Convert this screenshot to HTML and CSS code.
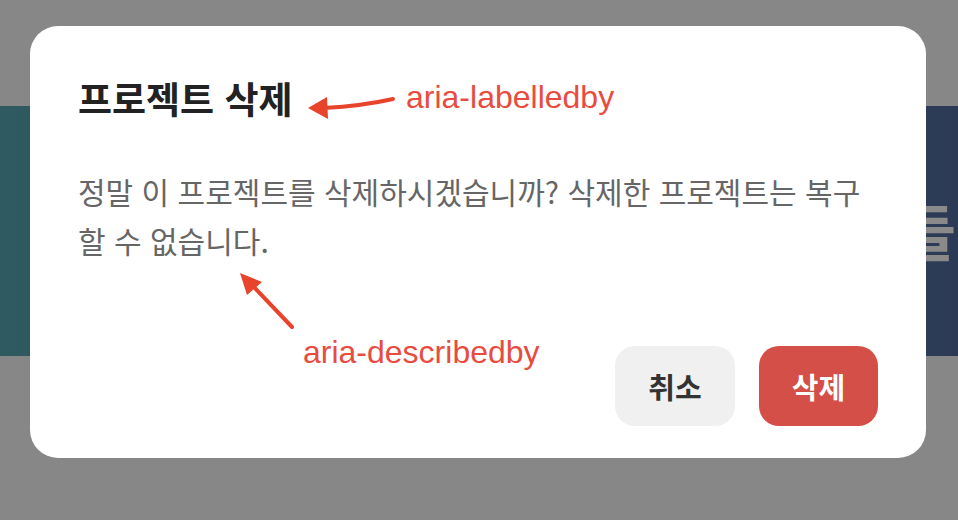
FILE: index.html
```html
<!DOCTYPE html>
<html lang="ko">
<head>
<meta charset="utf-8">
<title>프로젝트 삭제</title>
<link rel="stylesheet" href="styles.css">
</head>
<body>
<div class="page">
  <div class="hero">
    <span class="hero-text">나의 프로젝트들</span>
  </div>
</div>

<div class="modal" role="dialog" aria-modal="true" aria-labelledby="dlg-title" aria-describedby="dlg-desc">
  <h2 class="modal-title" id="dlg-title">프로젝트 삭제</h2>
  <p class="modal-desc" id="dlg-desc">정말 이 프로젝트를 삭제하시겠습니까? 삭제한 프로젝트는 복구 할 수 없습니다.</p>
  <div class="modal-actions">
    <button class="btn btn-cancel" type="button">취소</button>
    <button class="btn btn-danger" type="button">삭제</button>
  </div>
</div>

<div class="notes">
  <svg class="arrows" width="958" height="520" viewBox="0 0 958 520" aria-hidden="true">
    <path d="M393 99 Q362 106 324 108" fill="none" stroke="#e8432b" stroke-width="4" stroke-linecap="round"/>
    <polygon points="308,108 327,97 328,119" fill="#e8432b"/>
    <path d="M292 327 L252 285" fill="none" stroke="#e8432b" stroke-width="4" stroke-linecap="round"/>
    <polygon points="240,273 262,282 247,295" fill="#e8432b"/>
  </svg>
  <span class="note note-label">aria-labelledby</span>
  <span class="note note-desc">aria-describedby</span>
</div>
</body>
</html>
```

FILE: styles.css
```css
html, body {
  margin: 0;
  padding: 0;
}

body {
  width: 958px;
  height: 520px;
  overflow: hidden;
  background: #878787;
  font-family: "Noto Sans CJK KR", "Noto Sans", sans-serif;
  position: relative;
}

.page {
  padding-top: 106px;
}

.hero {
  height: 250px;
  background: linear-gradient(90deg, #2f5a60 0%, #2d4a5b 50%, #2c3a56 100%);
  display: flex;
  align-items: center;
  justify-content: flex-end;
  padding-right: 2px;
  overflow: hidden;
}

.hero-text {
  font-size: 60px;
  font-weight: 700;
  color: #8a8a8a;
  line-height: 1;
  margin-top: -2px;
}

.modal {
  position: absolute;
  left: 30px;
  top: 26px;
  width: 896px;
  height: 432px;
  box-sizing: border-box;
  padding: 48px 48px 32px;
  background: #ffffff;
  border-radius: 28px;
  display: flex;
  flex-direction: column;
}

.modal-title {
  margin: 0;
  font-size: 37px;
  font-weight: 700;
  line-height: 48px;
  color: #222222;
}

.modal-desc {
  margin: 45px 0 0;
  font-size: 30px;
  line-height: 49px;
  color: #666666;
  word-break: keep-all;
}

.modal-actions {
  margin-top: auto;
  display: flex;
  justify-content: flex-end;
  gap: 24px;
}

.btn {
  height: 80px;
  width: 120px;
  border: none;
  border-radius: 20px;
  font-family: "Noto Sans CJK KR", "Noto Sans", sans-serif;
  font-size: 29px;
  font-weight: 700;
  padding: 0;
}

.btn-cancel {
  background: #f0f0f0;
  color: #333333;
}

.btn-danger {
  width: 119px;
  background: #d44f47;
  color: #ffffff;
}

.notes {
  position: absolute;
  inset: 0;
  pointer-events: none;
}

.arrows {
  position: absolute;
  left: 0;
  top: 0;
}

.note {
  position: absolute;
  font-family: "Liberation Sans", Arial, sans-serif;
  font-size: 32px;
  line-height: 1;
  color: #e84c3f;
  white-space: nowrap;
}

.note-label {
  left: 406px;
  top: 81px;
}

.note-desc {
  left: 303px;
  top: 336px;
}
```
